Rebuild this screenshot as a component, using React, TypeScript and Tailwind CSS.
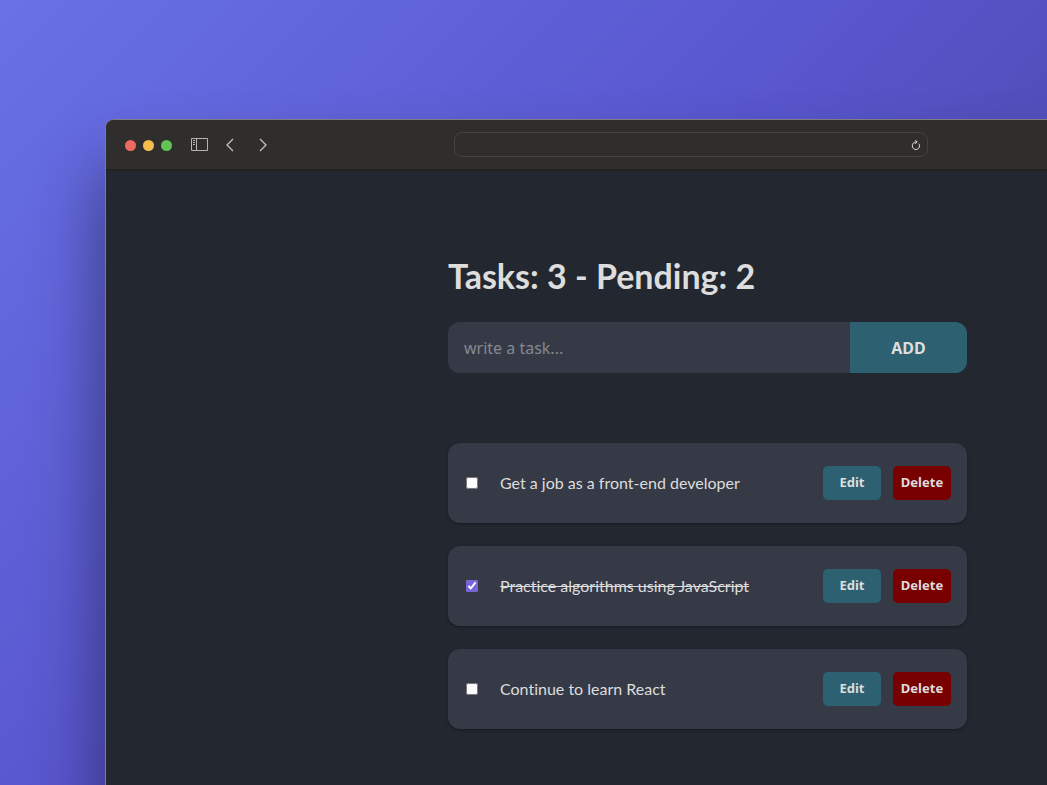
import { useState } from "react";

type Task = { id: number; text: string; done: boolean };

const initialTasks: Task[] = [
  { id: 1, text: "Get a job as a front-end developer", done: false },
  { id: 2, text: "Practice algorithms using JavaScript", done: true },
  { id: 3, text: "Continue to learn React", done: false },
];

function SidebarIcon() {
  return (
    <svg width="18" height="14" viewBox="0 0 18 14" fill="none" stroke="#b4b3b1" aria-hidden="true">
      <path d="M.5.5h16v12H.5zM5.5.5v12" />
      <path d="M2 2.500h2M2 4.500h2M2 6.500h2" />
    </svg>
  );
}

function Chevron({ d }: { d: string }) {
  return (
    <svg width="8" height="14" viewBox="0 0 8 14" fill="none" stroke="#c3c2c0" strokeWidth="1.3" aria-hidden="true">
      <path d={d} />
    </svg>
  );
}

function ReloadIcon() {
  return (
    <svg width="10" height="12" viewBox="0 0 10 12" fill="none" stroke="#e6e6e5" aria-hidden="true">
      <path d="M5 3C2.800 3 1.300 4.700 1.300 6.800S2.900 10.500 4.900 10.500 8.500 8.900 8.500 6.800C8.500 6 8.300 5.300 7.900 4.700" />
      <path d="M4.300 1 6.200 3 4.300 4.700" />
    </svg>
  );
}

function Toolbar() {
  return (
    <header className="flex h-[51px] items-center border-b-2 border-[#21211f] bg-[#2f2e2c] pl-[19px] pr-[119px]">
      <div className="flex w-[329px] shrink-0 items-center">
        <div className="flex gap-[7px] pt-[2px]">
          <span className="size-[11px] rounded-full bg-[#ee6a5f]" />
          <span className="size-[11px] rounded-full bg-[#f5bd4f]" />
          <span className="size-[11px] rounded-full bg-[#61c454]" />
        </div>
        <button type="button" aria-label="Show sidebar" className="ml-[19px]">
          <SidebarIcon />
        </button>
        <button type="button" aria-label="Back" className="ml-[17px]">
          <Chevron d="M7 1 1 7l6 6" />
        </button>
        <button type="button" aria-label="Forward" className="ml-[25px]">
          <Chevron d="M1 1l6 6-6 6" />
        </button>
      </div>
      <div className="flex h-[25px] flex-1 items-center rounded-lg border border-[#444340] pr-[6px]">
        <input type="text" aria-label="Address" className="h-full min-w-0 flex-1 bg-transparent px-3 text-xs text-[#dddddd] outline-none" />
        <button type="button" aria-label="Reload">
          <ReloadIcon />
        </button>
      </div>
    </header>
  );
}

function TaskRow({ task, onToggle, onDelete }: { task: Task; onToggle: () => void; onDelete: () => void }) {
  const id = `task-${task.id}`;
  return (
    <li className="flex h-20 items-center rounded-xl bg-[#353a46] px-4 shadow-[0_1px_3px_rgba(0,0,0,0.4)]">
      <input
        id={id}
        type="checkbox"
        checked={task.done}
        onChange={onToggle}
        className="ml-[2px] size-3 shrink-0 accent-[#7764d8]"
      />
      <label htmlFor={id} className={task.done ? "ml-[22px] flex-1 text-base line-through" : "ml-[22px] flex-1 text-base"}>
        {task.text}
      </label>
      <div className="flex gap-3 font-['Noto_Sans',sans-serif] text-[13px] font-bold">
        <button type="button" className="h-[34px] w-[58px] rounded-[5px] bg-[#2d6070]">
          Edit
        </button>
        <button type="button" onClick={onDelete} className="h-[34px] w-[58px] rounded-[5px] bg-[#780000]">
          Delete
        </button>
      </div>
    </li>
  );
}

export default function App() {
  const [tasks, setTasks] = useState(initialTasks);
  const [draft, setDraft] = useState("");

  const addTask = () => {
    if (!draft.trim()) return;
    setTasks([...tasks, { id: Date.now(), text: draft.trim(), done: false }]);
    setDraft("");
  };

  return (
    <div className="flex min-h-screen flex-col overflow-hidden bg-[linear-gradient(135deg,#6871e6_0%,#5956ce_47%,#524fbb_63%,#45439c_100%)] pl-[105px] pt-[119px] font-['Lato',sans-serif] text-[#dddddd] [font-variant-ligatures:none]">
      <div className="-mb-20 flex flex-1 flex-col rounded-tl-[9px] border-l border-t border-[#7f7d85] bg-[#232830] shadow-[0_50px_70px_rgba(0,0,0,0.45)]">
        <div className="overflow-hidden rounded-tl-lg">
          <Toolbar />
        </div>
        <main className="pb-[136px] pl-[342px] pr-20 pt-[81px]">
          <h1 className="text-[34px] font-bold leading-[48px]">
            Tasks: {tasks.length} - Pending: {tasks.filter((t) => !t.done).length}
          </h1>
          <form
            className="mt-[22px] flex h-[51px] overflow-hidden rounded-xl bg-[#353a46] font-['Noto_Sans',sans-serif]"
            onSubmit={(e) => {
              e.preventDefault();
              addTask();
            }}
          >
            <input
              type="text"
              aria-label="New task"
              placeholder="write a task..."
              value={draft}
              onChange={(e) => setDraft(e.target.value)}
              className="min-w-0 flex-1 bg-transparent px-4 text-base outline-none placeholder:text-[#858891]"
            />
            <button type="submit" className="w-[117px] bg-[#2d6070] text-base font-bold">
              ADD
            </button>
          </form>
          <ul className="mt-[70px] flex flex-col gap-[23px]">
            {tasks.map((task) => (
              <TaskRow
                key={task.id}
                task={task}
                onToggle={() => setTasks(tasks.map((t) => (t.id === task.id ? { ...t, done: !t.done } : t)))}
                onDelete={() => setTasks(tasks.filter((t) => t.id !== task.id))}
              />
            ))}
          </ul>
        </main>
      </div>
    </div>
  );
}
